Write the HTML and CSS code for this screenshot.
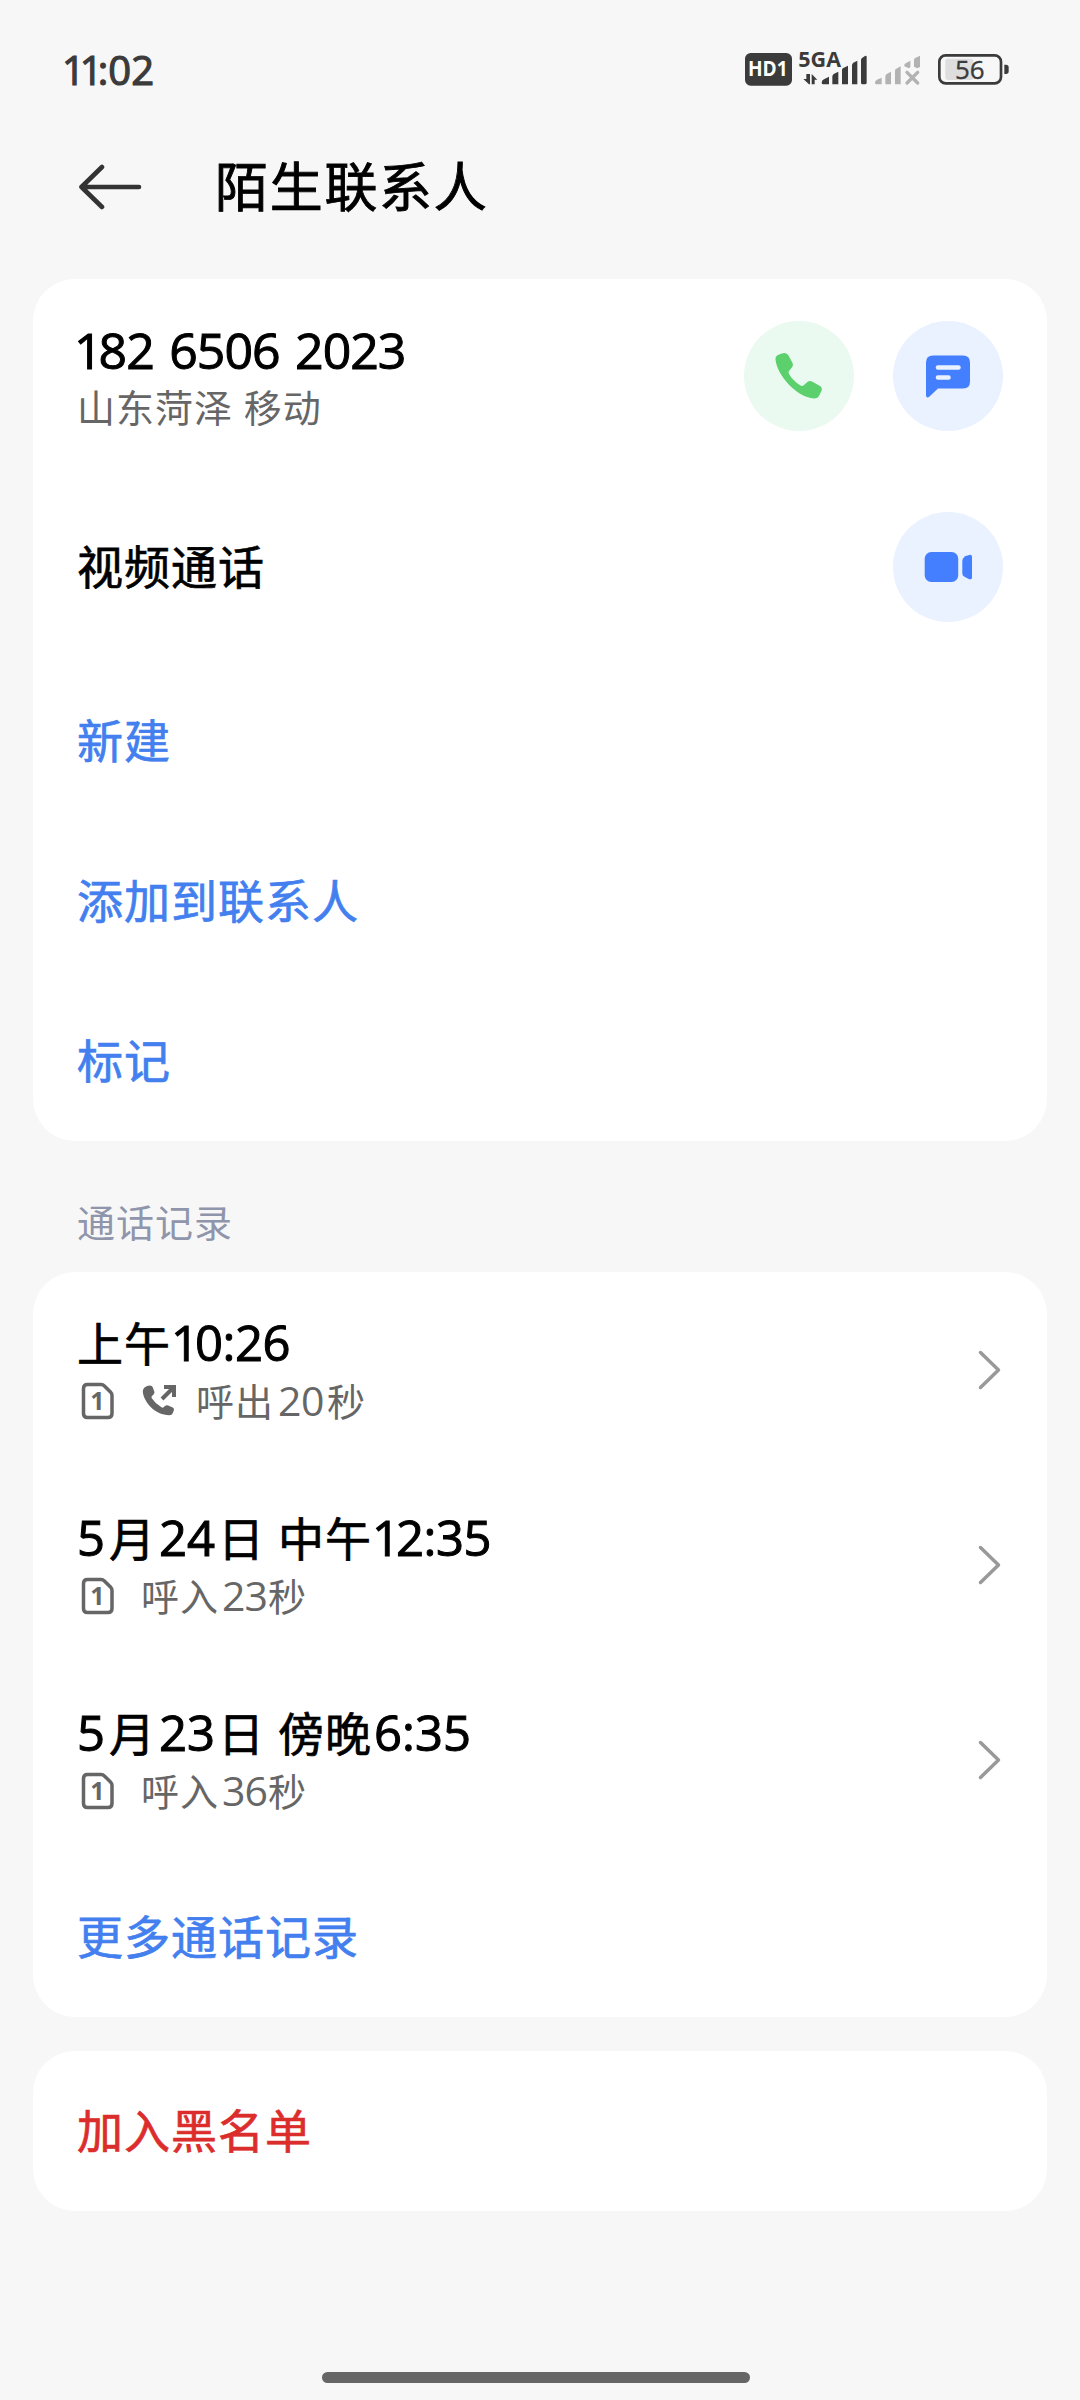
FILE: index.html
```html
<!DOCTYPE html>
<html lang="zh-CN">
<head>
<meta charset="utf-8">
<title>陌生联系人</title>
<link rel="stylesheet" href="styles.css">
</head>
<body>
<div class="screen">
  <header class="status">
    <span class="clock"><span class="ones">11</span>:02</span>
    <svg class="status-icons" viewBox="0 0 960 240">
      <rect x="75" y="69" width="141" height="98" rx="17" fill="#3b3b3b"/>
      <text x="84" y="139" class="hd" textLength="119" lengthAdjust="spacingAndGlyphs">HD1</text>
      <text x="235" y="110" class="net" textLength="128" lengthAdjust="spacingAndGlyphs">5GA</text>
      <g fill="#3b3b3b">
        <path d="M250 147h9v-15h11v31h-3zM275 163v-31l17 17h-8v14z"/>
        <path d="M305 158q0-7 7-10l15-8v23h-17q-5 0-5-5zM337 140q0-5 4-8l14-7v38h-18zM366 120q0-4 4-6l14-7v56h-18zM396 106q0-5 4-8l12-6v71h-16zM423 90q0-5 4-7l8-5q5-2 5 3v77q0 5-5 5h-7q-5 0-5-5z"/>
      </g>
      <g fill="#b2b2b2">
        <path d="M465 158q0-6 6-9l14-6v20h-15q-5 0-5-5zM496 140q0-5 4-8l13-7v38h-17zM525 122q0-4 4-6l13-7v54h-17zM553 106q0-4 4-6l14-8v19l-4 4-14-6zM582 90q0-4 4-6l14-7v34l-8 4-10-5z"/>
        <path d="M561 127 593 159M593 127 561 159" stroke="#b2b2b2" stroke-width="10" stroke-linecap="round"/>
      </g>
      <rect x="676" y="86" width="84" height="64" rx="8" fill="#dedede"/>
      <rect x="658" y="76" width="185" height="84" rx="19" fill="none" stroke="#3b3b3b" stroke-width="8"/>
      <path d="M853 104h5q8 0 8 8v12q0 8-8 8h-5z" fill="#3b3b3b"/>
      <text x="705" y="147" class="battery" textLength="89" lengthAdjust="spacingAndGlyphs">56</text>
    </svg>
  </header>

  <nav class="titlebar">
    <svg class="back" viewBox="0 0 64 46">
      <path d="M61 23H3.500M24 3 3.500 23 24 43" fill="none" stroke="#333" stroke-width="4.600" stroke-linecap="round" stroke-linejoin="round"/>
    </svg>
    <h1 class="title">陌生联系人</h1>
  </nav>

  <section class="card">
    <div class="row row-number">
      <div class="lines">
        <div class="primary phone"><span class="lead">1</span>82 6506 2023</div>
        <div class="secondary">山东菏泽 移动</div>
      </div>
      <div class="actions">
        <span class="circle green">
          <svg viewBox="0 0 110 110"><path d="M33 34.500Q37 32 40.500 32q2.500 0 4 2.500l3.800 7q1.500 3-.8 5.500l-2.500 3q-1 1.200 0 3Q49 60 56.500 64.500q1.800 1 3.200-.2l4-3.500q2-1.500 4.300-.3l8 4.500q2.700 1.700 1.500 4.700l-2 4.300q-1.500 3.500-5.500 3.500C52 76 33 54 31.500 38.500q-.3-2.700 1.500-4Z" fill="#5bd06c"/></svg>
        </span>
        <span class="circle blue">
          <svg viewBox="0 0 110 110"><path d="M40 34.500H70q7 0 7 7V60.500q0 7-7 7H45L36.500 75.500q-3 2.200-3.500-1V41.500q0-7 7-7Z" fill="#437fff"/><path d="M45 46.500H65.500M45 56.500H55.500" stroke="#eaf1ff" stroke-width="4.600" stroke-linecap="round"/></svg>
        </span>
      </div>
    </div>
    <div class="row row-video">
      <div class="primary">视频通话</div>
      <span class="circle blue">
        <svg viewBox="0 0 110 110"><rect x="31.700" y="40" width="33.500" height="30" rx="6.500" fill="#437fff"/><path d="M71 44.500 75.500 43.200Q79 42 79 45V65.500q0 2.700-3.300 1.500L71.500 64.800Q69.300 63.700 69.300 61.500V49q0-2.800 2.400-4Z" fill="#437fff"/></svg>
      </span>
    </div>
    <div class="row link">新建</div>
    <div class="row link">添加到联系人</div>
    <div class="row link">标记</div>
  </section>

  <h2 class="section">通话记录</h2>

  <section class="card">
    <div class="row row-call">
      <div class="lines">
        <div class="primary">上午<span class="num time"><span class="lead">1</span>0:26</span></div>
        <div class="secondary meta"><svg class="sim" viewBox="0 0 34 38"><path d="M6.500 2.500H20q2 0 3.400 1.400L29.500 10q1.500 1.500 1.500 3.500V31.500q0 4-4 4H6.500q-4 0-4-4V6.500q0-4 4-4Z"/><text x="16.500" y="28" text-anchor="middle">1</text></svg><svg class="outgoing" viewBox="0 0 36 34"><path d="M2.500 3.500Q6 1 9 1.800q1.200.4 1.700 1.500L12.300 7.500q.6 1.700-.8 3L10 12q-1 1-.2 2.300Q13.500 20 19.500 23.300q1.300.8 2.300-.2l1.500-1.300q1.300-1.100 2.900-.4l4.500 2q1.900 1 1.200 2.900l-1.200 3q-.8 2-3.200 2C13 31 1.500 18 .8 7.500Q.8 4.800 2.500 3.500Z" fill="#666"/><path d="M20 15 31 4" stroke="#666" stroke-width="4"/><path d="M22 1H34V13H30V5H22Z" fill="#666"/></svg><span>呼出<span class="num small">20</span>秒</span></div>
      </div>
      <svg class="chevron" viewBox="0 0 24 42"><path d="M2.500 3.500 20.500 21 2.500 38.500"/></svg>
    </div>
    <div class="row row-call">
      <div class="lines">
        <div class="primary"><span class="num month">5</span>月<span class="num day">24</span>日 中午<span class="num time"><span class="lead">1</span>2:35</span></div>
        <div class="secondary meta"><svg class="sim" viewBox="0 0 34 38"><path d="M6.500 2.500H20q2 0 3.400 1.400L29.500 10q1.500 1.500 1.500 3.500V31.500q0 4-4 4H6.500q-4 0-4-4V6.500q0-4 4-4Z"/><text x="16.500" y="28" text-anchor="middle">1</text></svg><span>呼入<span class="num small narrow">23</span>秒</span></div>
      </div>
      <svg class="chevron" viewBox="0 0 24 42"><path d="M2.500 3.500 20.500 21 2.500 38.500"/></svg>
    </div>
    <div class="row row-call">
      <div class="lines">
        <div class="primary"><span class="num month">5</span>月<span class="num day">23</span>日 傍晚<span class="num evening">6:35</span></div>
        <div class="secondary meta"><svg class="sim" viewBox="0 0 34 38"><path d="M6.500 2.500H20q2 0 3.400 1.400L29.500 10q1.500 1.500 1.500 3.500V31.500q0 4-4 4H6.500q-4 0-4-4V6.500q0-4 4-4Z"/><text x="16.500" y="28" text-anchor="middle">1</text></svg><span>呼入<span class="num small narrow">36</span>秒</span></div>
      </div>
      <svg class="chevron" viewBox="0 0 24 42"><path d="M2.500 3.500 20.500 21 2.500 38.500"/></svg>
    </div>
    <div class="row link">更多通话记录</div>
  </section>

  <section class="card card-block">
    <div class="row link danger">加入黑名单</div>
  </section>

  <div class="home"></div>
</div>
</body>
</html>
```

FILE: styles.css
```css
* { box-sizing: border-box; }

body {
  margin: 0;
  background: #f7f7f7;
  font-family: "Open Sans", "Noto Sans CJK SC", sans-serif;
  color: #000;
}

.screen {
  display: flex;
  flex-direction: column;
  width: 1080px;
  height: 2400px;
  padding: 0 33px 17px;
}

.status {
  display: flex;
  justify-content: space-between;
  align-items: center;
  height: 140px;
  padding: 0 7px 0 29px;
}

.clock {
  font-size: 40px;
  -webkit-text-stroke: 1.200px;
  line-height: 60px;
  color: #3b3b3b;
}

.ones { letter-spacing: -5px; }

.status-icons { width: 320px; height: 80px; }

.status-icons text { font-family: "Open Sans", sans-serif; }
.hd { font-size: 62px; font-weight: 700; fill: #fff; }
.net { font-size: 63px; font-weight: 700; fill: #3b3b3b; }
.battery { font-size: 76px; font-weight: 400; fill: #3b3b3b; stroke: #3b3b3b; stroke-width: 1; }

.titlebar {
  display: flex;
  align-items: center;
  gap: 73px;
  height: 94px;
  margin-bottom: 45px;
  padding-left: 45px;
}

.back { width: 64px; height: 46px; }

.title {
  margin: 0;
  font-size: 53px;
  font-weight: 400;
  -webkit-text-stroke: 0.900px;
  letter-spacing: 1.700px;
  line-height: 80px;
}

.card {
  flex: none;
  border-radius: 42px;
  background: #fff;
}

.card-block { margin-top: 34px; }

.row {
  display: flex;
  align-items: center;
  justify-content: space-between;
  height: 160px;
  padding: 0 44px;
  font-size: 46px;
  letter-spacing: 1px;
  line-height: 58px;
}

.row-number { height: 194px; }
.row-video { height: 188px; }
.row-call { height: 195px; }

.lines { padding-top: 3px; }

.primary {
  font-size: 46px;
  -webkit-text-stroke: 0.700px;
  line-height: 58px;
  white-space: pre;
}

.row-video .primary { padding-bottom: 2px; }

.phone {
  font-size: 50px;
  -webkit-text-stroke: 1px;
  letter-spacing: -1px;
  word-spacing: 3.500px;
  line-height: 58px;
}

.phone .lead { margin-left: -3px; letter-spacing: -4px; }

.secondary {
  font-size: 38px;
  line-height: 56px;
  color: #666;
}

.meta { display: flex; align-items: center; line-height: 57px; }

.num { font-size: 49px; letter-spacing: 0; -webkit-text-stroke: 1px; }
.month { padding-right: 4px; }
.day { padding: 0 3px; }
.time { letter-spacing: -0.500px; }
.time .lead { letter-spacing: -4px; }
.evening { padding-left: 2px; }
.small { padding: 0 3px 0 4px; font-size: 41px; letter-spacing: -0.500px; -webkit-text-stroke: 0; }
.narrow { padding: 0 1px 0 3px; letter-spacing: -1px; }

.sim { width: 34px; height: 38px; margin: 0 26px 0 4px; }
.sim path { fill: none; stroke: #666; stroke-width: 3.500; }
.sim text { font-family: "Open Sans", sans-serif; font-size: 25px; font-weight: 700; fill: #666; letter-spacing: 0; }
.outgoing { width: 36px; height: 34px; margin: 0 18px 0 1px; }

.actions { display: flex; gap: 39px; }

.circle {
  width: 110px;
  height: 110px;
  border-radius: 50%;
}

.circle svg { display: block; width: 110px; height: 110px; }
.green { background: #eafaf0; }
.blue { background: #eaf1ff; }

.chevron { width: 24px; height: 42px; margin-right: 1px; }
.chevron path { fill: none; stroke: #999; stroke-width: 3.500; stroke-linecap: round; stroke-linejoin: round; }

.link {
  padding-bottom: 3px;
  -webkit-text-stroke: 0.700px;
  color: #437fee;
}
.danger { color: #dc2d2d; }

.section {
  margin: 0;
  padding: 0 44px;
  height: 131px;
  font-size: 38px;
  font-weight: 400;
  letter-spacing: 1px;
  line-height: 162px;
  color: #8f95aa;
}

.home {
  width: 428px;
  height: 11px;
  margin: auto 0 0 289px;
  border-radius: 6px;
  background: #666;
}
```
